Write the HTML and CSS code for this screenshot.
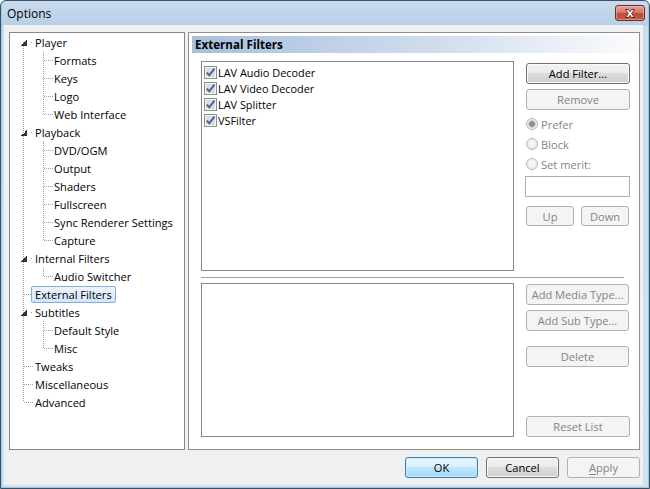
FILE: index.html
```html
<!DOCTYPE html>
<html lang="en">
<head>
    <meta charset="UTF-8">
    <title>Options</title>
    <link rel="stylesheet" href="styles.css">
</head>
<body>
<svg class="defs" width="0" height="0">
    <symbol id="chk" viewBox="0 0 13 13">
        <rect x="0.5" y="0.5" width="12" height="12" fill="#f6f6f6" stroke="#8e8f8f"/>
        <rect x="2" y="2" width="9" height="9" fill="#dcdcdc"/>
        <path d="M2.8 6.6 L5.2 9.2 L10.6 2.6" fill="none" stroke="#45609a" stroke-width="1.9"/>
    </symbol>
</svg>

<div class="window">

    <div class="titlebar">
        <span class="titlebar__title">Options</span>
        <span class="titlebar__close">
            <svg width="14" height="11" viewBox="0 0 14 11">
                <path d="M2.5 1.5 H5.5 L7 3.6 L8.5 1.5 H11.5 L8.6 5.5 L11.5 9.5 H8.5 L7 7.4 L5.5 9.5 H2.5 L5.4 5.5 Z"
                      fill="#fff" stroke="#5b241c" stroke-width="0.9" stroke-linejoin="round"/>
            </svg>
        </span>
    </div>

    <div class="client">
        <div class="main">

            <div class="tree">
                <ul class="tree__root">
                    <li>
                        <div class="tree__row tree__row--open"><span class="tree__label">Player</span></div>
                        <ul class="tree__children">
                            <li class="tree__row tree__row--child"><span class="tree__label">Formats</span></li>
                            <li class="tree__row tree__row--child"><span class="tree__label">Keys</span></li>
                            <li class="tree__row tree__row--child"><span class="tree__label">Logo</span></li>
                            <li class="tree__row tree__row--child"><span class="tree__label">Web Interface</span></li>
                        </ul>
                    </li>
                    <li>
                        <div class="tree__row tree__row--open"><span class="tree__label">Playback</span></div>
                        <ul class="tree__children">
                            <li class="tree__row tree__row--child"><span class="tree__label">DVD/OGM</span></li>
                            <li class="tree__row tree__row--child"><span class="tree__label">Output</span></li>
                            <li class="tree__row tree__row--child"><span class="tree__label">Shaders</span></li>
                            <li class="tree__row tree__row--child"><span class="tree__label">Fullscreen</span></li>
                            <li class="tree__row tree__row--child"><span class="tree__label">Sync Renderer Settings</span></li>
                            <li class="tree__row tree__row--child"><span class="tree__label">Capture</span></li>
                        </ul>
                    </li>
                    <li>
                        <div class="tree__row tree__row--open"><span class="tree__label">Internal Filters</span></div>
                        <ul class="tree__children">
                            <li class="tree__row tree__row--child"><span class="tree__label">Audio Switcher</span></li>
                        </ul>
                    </li>
                    <li class="tree__row"><span class="tree__label tree__label--selected">External Filters</span></li>
                    <li>
                        <div class="tree__row tree__row--open"><span class="tree__label">Subtitles</span></div>
                        <ul class="tree__children">
                            <li class="tree__row tree__row--child"><span class="tree__label">Default Style</span></li>
                            <li class="tree__row tree__row--child"><span class="tree__label">Misc</span></li>
                        </ul>
                    </li>
                    <li class="tree__row"><span class="tree__label">Tweaks</span></li>
                    <li class="tree__row"><span class="tree__label">Miscellaneous</span></li>
                    <li class="tree__row"><span class="tree__label">Advanced</span></li>
                </ul>
            </div>

            <div class="page">
                <div class="page__header">External Filters</div>

                <div class="page__body">
                    <div class="page__row page__row--filters">
                        <div class="listbox">
                            <div class="listbox__item"><svg class="check"><use href="#chk"/></svg>LAV Audio Decoder</div>
                            <div class="listbox__item"><svg class="check"><use href="#chk"/></svg>LAV Video Decoder</div>
                            <div class="listbox__item"><svg class="check"><use href="#chk"/></svg>LAV Splitter</div>
                            <div class="listbox__item"><svg class="check"><use href="#chk"/></svg>VSFilter</div>
                        </div>

                        <div class="side">
                            <button class="btn btn--add-filter" type="button">Add Filter...</button>
                            <button class="btn btn--remove" type="button" disabled>Remove</button>

                            <div class="radios">
                                <label class="radio"><span class="radio__dot radio__dot--on"></span>Prefer</label>
                                <label class="radio"><span class="radio__dot"></span>Block</label>
                                <label class="radio"><span class="radio__dot"></span>Set merit:</label>
                            </div>

                            <input class="edit" type="text" disabled>

                            <div class="updown">
                                <button class="btn btn--small" type="button" disabled>Up</button>
                                <button class="btn btn--small" type="button" disabled>Down</button>
                            </div>
                        </div>
                    </div>

                    <div class="separator"></div>

                    <div class="page__row page__row--types">
                        <div class="listbox"></div>

                        <div class="side">
                            <button class="btn btn--media" type="button" disabled>Add Media Type...</button>
                            <button class="btn btn--sub" type="button" disabled>Add Sub Type...</button>
                            <button class="btn btn--delete" type="button" disabled>Delete</button>
                            <button class="btn btn--reset" type="button" disabled>Reset List</button>
                        </div>
                    </div>
                </div>
            </div>

        </div>

        <div class="footer">
            <button class="btn btn--default" type="button">OK</button>
            <button class="btn" type="button">Cancel</button>
            <button class="btn" type="button" disabled><u>A</u>pply</button>
        </div>
    </div>

</div>
</body>
</html>
```

FILE: styles.css
```css
html, body {
    margin: 0;
    padding: 0;
}

body {
    font-family: "Open Sans", "Noto Sans", sans-serif;
    font-size: 11.1px;
    color: #000;
}

.defs {
    position: absolute;
}

.window {
    width: 650px;
    height: 489px;
    box-sizing: border-box;
    display: flex;
    flex-direction: column;
    border: 1px solid #3f4f60;
    border-radius: 6px 6px 0 0;
    background: linear-gradient(to bottom, #c8dbef 0, #b9cfe7 24px, #cbdcef 25px, #d3e2f2 100%);
    box-shadow: inset 1px 0 #8fd0ef, inset -1px 0 #8fd0ef, inset 0 -1px #8fd0ef;
}

.titlebar {
    height: 24px;
    flex: none;
    display: flex;
    align-items: center;
    justify-content: space-between;
    padding: 0 4px 0 6px;
}
.titlebar__title {
    font-size: 12px;
    padding-top: 1px;
}
.titlebar__close {
    width: 30px;
    height: 16px;
    box-sizing: border-box;
    display: flex;
    align-items: center;
    justify-content: center;
    border: 1px solid #6e2c25;
    border-radius: 3px;
    background: linear-gradient(to bottom, #e0a296 0, #d27a6b 45%, #c2493a 55%, #c8573f 100%);
    box-shadow: inset 0 0 0 1px rgba(255, 210, 200, .45);
}

.client {
    flex: 1;
    display: flex;
    flex-direction: column;
    margin: 0 6px 3px 3px;
    padding: 7px 3px 7px 5px;
    background: #f0f0f0;
}

.main {
    display: flex;
    gap: 3px;
    height: 418px;
}

/* Tree */

.tree {
    width: 176px;
    flex: none;
    box-sizing: border-box;
    border: 1px solid #828790;
    background: #fff;
}
.tree ul {
    list-style: none;
    margin: 0;
    padding: 0;
}
.tree__root {
    background: repeating-linear-gradient(to bottom, #a0a0a0 0 1px, transparent 1px 2px) 13px 9px / 1px calc(100% - 18px) no-repeat;
}
.tree__children {
    background: repeating-linear-gradient(to bottom, #a0a0a0 0 1px, transparent 1px 2px) 33px 0 / 1px calc(100% - 9px) no-repeat;
}
.tree__row {
    display: flex;
    align-items: center;
    height: 18px;
    padding-left: 25px;
    background: repeating-linear-gradient(to right, #a0a0a0 0 1px, transparent 1px 2px) 14px 9px / 9px 1px no-repeat;
}
.tree__row--open {
    background:
        linear-gradient(to bottom right, transparent 50%, #333 50%) 11px 7px / 6px 6px no-repeat,
        linear-gradient(#a0a0a0, #a0a0a0) 21px 9px / 1px 1px no-repeat;
}
.tree__row--child {
    padding-left: 44px;
    background: repeating-linear-gradient(to right, #a0a0a0 0 1px, transparent 1px 2px) 34px 9px / 9px 1px no-repeat;
}
.tree__label {
    margin-left: -4px;
    padding: 0 3px;
    line-height: 15px;
    border: 1px solid transparent;
    border-radius: 2px;
    white-space: nowrap;
}
.tree__label--selected {
    border-color: #84acdd;
    background: linear-gradient(to bottom, #edf5fe, #d3e6fc);
}

/* Page */

.page {
    flex: 1;
    display: flex;
    flex-direction: column;
    border: 1px solid #8e8f8f;
    background: #fff;
}
.page__header {
    height: 17px;
    margin: 3px 0 0 3px;
    padding-left: 3px;
    line-height: 17px;
    font-weight: bold;
    font-size: 11.6px;
    background: linear-gradient(to right, #a8c0dd 0, #d1dded 55%, #fbfcfe 100%);
}
.page__body {
    display: flex;
    flex-direction: column;
    padding: 8px 0 0 12px;
}
.page__row {
    display: flex;
}
.page__row--filters {
    height: 210px;
}
.page__row--types {
    height: 154px;
}

.listbox {
    width: 313px;
    box-sizing: border-box;
    padding: 2px;
    border: 1px solid #828790;
    background: #fff;
}
.listbox__item {
    display: flex;
    align-items: center;
    height: 16px;
    font-size: 10.9px;
    white-space: nowrap;
}
.check {
    width: 13px;
    height: 13px;
    margin-right: 1px;
    flex: none;
}

.separator {
    width: 423px;
    height: 1px;
    margin: 6px 0 5px;
    background: #a0a0a0;
}

.side {
    width: 104px;
    margin-left: 12px;
    display: flex;
    flex-direction: column;
}

/* Buttons */

.btn {
    height: 21px;
    box-sizing: border-box;
    padding: 0;
    font: inherit;
    color: #000;
    border: 1px solid #707070;
    border-radius: 3px;
    background: linear-gradient(to bottom, #f2f2f2 0, #ebebeb 50%, #dddddd 50%, #cfcfcf 100%);
    box-shadow: inset 0 0 0 1px #fbfbfb;
}
.btn:disabled {
    color: #838383;
    border-color: #adb2b5;
    background: #f4f4f4;
    box-shadow: none;
}
.btn--default {
    border-color: #3c7fb1;
    background: linear-gradient(to bottom, #eaf6fd 0, #d9f0fc 50%, #bee6fd 50%, #a7d9f5 100%);
    box-shadow: inset 0 0 0 1px #c6eaff;
}
.btn--add-filter {
    margin-top: 2px;
}
.btn--remove {
    margin-top: 5px;
}
.btn--media {
    margin-top: 1px;
    width: 103px;
}
.btn--sub {
    margin-top: 5px;
    width: 103px;
}
.btn--delete {
    margin-top: 15px;
    width: 103px;
}
.btn--reset {
    margin-top: auto;
}
.footer .btn {
    width: 73px;
}
.footer u {
    text-decoration-thickness: 1px;
    text-underline-offset: 2px;
}

.radios {
    margin-top: 4px;
}
.radio {
    display: flex;
    align-items: center;
    gap: 3px;
    height: 20px;
    color: #838383;
}
.radio__dot {
    width: 12px;
    height: 12px;
    box-sizing: border-box;
    border: 1px solid #b8b8b8;
    border-radius: 50%;
    background: radial-gradient(circle at 50% 40%, #fbfbfb 0, #e2e2e2 100%);
}
.radio__dot--on {
    background: radial-gradient(circle, #8f8f8f 0 2.5px, #c9c9c9 3px 3.5px, #ececec 4px);
}

.edit {
    height: 21px;
    width: 105px;
    margin: 2px 0 0 -1px;
    box-sizing: border-box;
    border: 1px solid #afafaf;
    background: #fff;
    font: inherit;
}

.updown {
    display: flex;
    gap: 7px;
    margin-top: 9px;
}
.btn--small {
    width: 48px;
    height: 20px;
}

.footer {
    display: flex;
    justify-content: flex-end;
    gap: 8px;
    margin-top: 7px;
}
```
